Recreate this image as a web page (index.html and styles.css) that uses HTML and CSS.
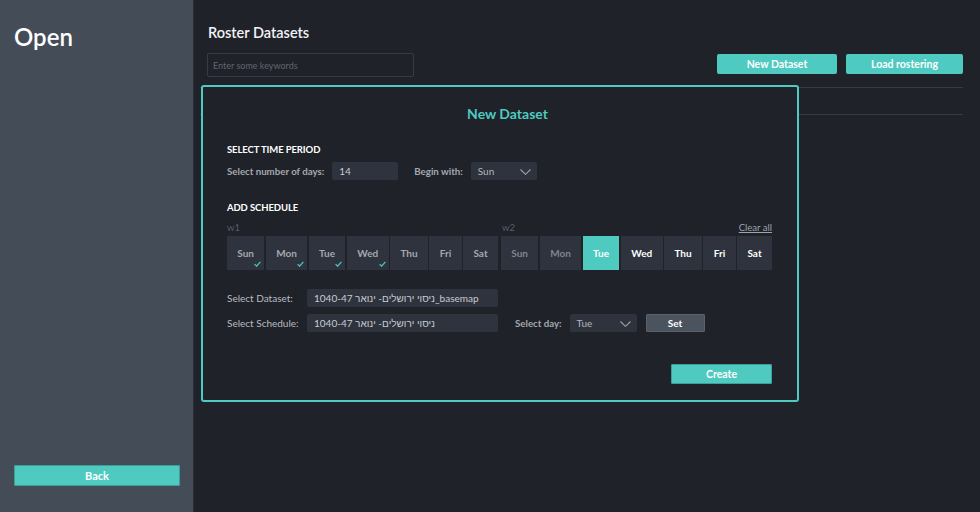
FILE: index.html
```html
<!DOCTYPE html>
<html>
<head>
<meta charset="utf-8">
<link rel="stylesheet" href="styles.css">
</head>
<body>
<div class="app">
  <aside class="sidebar">
    <h1 class="side-title">Open</h1>
    <button class="btn btn-back">Back</button>
  </aside>
  <main class="main">
    <h2 class="page-title">Roster Datasets</h2>
    <div class="toolbar">
      <div class="search">Enter some keywords</div>
      <div class="toolbar-btns">
        <button class="btn btn-top">New Dataset</button>
        <button class="btn btn-top">Load rostering</button>
      </div>
    </div>
    <div class="table">
      <div class="table-row"></div>
      <div class="table-row"></div>
    </div>

    <div class="modal">
      <div class="modal-title">New Dataset</div>

      <div class="section-title">SELECT TIME PERIOD</div>
      <div class="row">
        <span class="lbl-bold">Select number of days:</span>
        <div class="field field-days">14</div>
        <span class="lbl-bold lbl-begin">Begin with:</span>
        <div class="field field-select">Sun
          <svg class="chev" width="11" height="6" viewBox="0 0 11 6"><polyline points="0.5,0.5 5.5,5.3 10.5,0.5" fill="none" stroke="#9ba1a9" stroke-width="1.1"/></svg>
        </div>
      </div>

      <div class="section-title section-2">ADD SCHEDULE</div>
      <div class="weeks-labels">
        <span class="wk wk1">w1</span>
        <span class="wk wk2">w2</span>
        <span class="clear">Clear all</span>
      </div>
      <div class="weeks">
        <div class="week">
          <div class="day">Sun<svg class="check" width="7" height="6" viewBox="0 0 7 6"><polyline points="0.6,3.2 2.6,5.2 6.4,0.8" fill="none" stroke="#4ecac1" stroke-width="1.2"/></svg></div>
          <div class="day">Mon<svg class="check" width="7" height="6" viewBox="0 0 7 6"><polyline points="0.6,3.2 2.6,5.2 6.4,0.8" fill="none" stroke="#4ecac1" stroke-width="1.2"/></svg></div>
          <div class="day">Tue<svg class="check" width="7" height="6" viewBox="0 0 7 6"><polyline points="0.6,3.2 2.6,5.2 6.4,0.8" fill="none" stroke="#4ecac1" stroke-width="1.2"/></svg></div>
          <div class="day">Wed<svg class="check" width="7" height="6" viewBox="0 0 7 6"><polyline points="0.6,3.2 2.6,5.2 6.4,0.8" fill="none" stroke="#4ecac1" stroke-width="1.2"/></svg></div>
          <div class="day">Thu</div>
          <div class="day">Fri</div>
          <div class="day">Sat</div>
        </div>
        <div class="week">
          <div class="day day-dim">Sun</div>
          <div class="day day-dim">Mon</div>
          <div class="day day-active">Tue</div>
          <div class="day day-white">Wed</div>
          <div class="day day-white">Thu</div>
          <div class="day day-white">Fri</div>
          <div class="day day-white">Sat</div>
        </div>
      </div>

      <div class="row row-ds">
        <span class="lbl lbl-wide">Select Dataset:</span>
        <div class="field field-wide">ניסוי ירושלים- ינואר 1040-47_basemap</div>
      </div>
      <div class="row row-sch">
        <span class="lbl lbl-wide">Select Schedule:</span>
        <div class="field field-wide">ניסוי ירושלים- ינואר 1040-47</div>
        <span class="lbl-bold lbl-day">Select day:</span>
        <div class="field field-select field-day">Tue
          <svg class="chev" width="11" height="6" viewBox="0 0 11 6"><polyline points="0.5,0.5 5.5,5.3 10.5,0.5" fill="none" stroke="#9ba1a9" stroke-width="1.1"/></svg>
        </div>
        <button class="btn btn-set">Set</button>
      </div>

      <div class="create-row">
        <button class="btn btn-create">Create</button>
      </div>
    </div>
  </main>
</div>
</body>
</html>
```
FILE: styles.css
```css
* { box-sizing: border-box; }
html, body {
  margin: 0;
  padding: 0;
  width: 980px;
  height: 512px;
  overflow: hidden;
  background: #1f2229;
  font-family: Lato, "Liberation Sans", sans-serif;
}
.app {
  display: flex;
  width: 980px;
  height: 512px;
}
.sidebar {
  width: 194px;
  flex: none;
  background: #444c58;
  border-right: 1px solid #2b2f37;
  display: flex;
  flex-direction: column;
  padding: 0 14px 26px 14px;
}
.side-title {
  margin: 22px 0 0 0;
  font-size: 24px;
  font-weight: 600;
  color: #ffffff;
  line-height: 30px;
}
.btn {
  border: none;
  font-family: Lato, "Liberation Sans", sans-serif;
  font-weight: 700;
  color: #ffffff;
  background: #4ecac1;
  border-radius: 2px;
  cursor: pointer;
  padding: 0;
}
.btn-back {
  margin-top: auto;
  width: 166px;
  height: 21px;
  font-size: 11px;
  box-shadow: 0 0 0 1px #3f9e98 inset;
}
.main {
  flex: 1;
  position: relative;
  padding: 0 17px 0 14px;
}
.page-title {
  margin: 24px 0 0 0;
  font-size: 14.5px;
  font-weight: 600;
  color: #f2f3f5;
  line-height: 17px;
}
.toolbar {
  margin-top: 12px;
  display: flex;
  justify-content: space-between;
  align-items: flex-start;
}
.search {
  width: 207px;
  height: 24px;
  border: 1px solid #363b45;
  border-radius: 2px;
  color: #5f6672;
  font-size: 9px;
  line-height: 24px;
  padding-left: 5px;
  margin-left: -1px;
}
.toolbar-btns {
  display: flex;
  gap: 9px;
  margin-top: 1px;
}
.btn-top {
  height: 20px;
  font-size: 10.5px;
  width: 120px;
}
.btn-top + .btn-top {
  width: 117px;
}
.table {
  margin-top: 10px;
  margin-left: -8px;
}
.table-row {
  height: 27px;
  border-top: 1px solid #363b45;
}
.modal {
  position: absolute;
  left: 7px;
  top: 85px;
  width: 598px;
  height: 317px;
  border: 2px solid #4ecac1;
  border-radius: 3px;
  background: #1f2229;
  padding: 0 25px 0 24px;
}
.modal-title {
  margin-top: 18px;
  padding-left: 16px;
  text-align: center;
  color: #4ecac1;
  font-size: 14px;
  font-weight: 700;
  line-height: 17px;
}
.section-title {
  margin-top: 22px;
  font-size: 9.5px;
  font-weight: 700;
  color: #ffffff;
  line-height: 12px;
  letter-spacing: -0.1px;
}
.section-2 {
  margin-top: 22px;
}
.row {
  display: flex;
  align-items: center;
  margin-top: 6px;
  height: 18px;
}
.lbl-bold {
  font-size: 9.7px;
  font-weight: 700;
  color: #a3a8b0;
}
.lbl {
  font-size: 10px;
  color: #b8bcc3;
}
.lbl-wide {
  width: 80px;
  flex: none;
}
.field {
  height: 18px;
  background: #2e333d;
  border-radius: 2px;
  font-size: 10px;
  color: #c8ccd2;
  line-height: 18px;
  padding-left: 7px;
  margin-left: 8px;
  position: relative;
  white-space: nowrap;
}
.field-days {
  width: 66px;
}
.lbl-begin {
  margin-left: 16px;
}
.field-select {
  width: 66px;
  color: #b2b7be;
}
.chev {
  position: absolute;
  right: 6px;
  top: 7px;
}
.weeks-labels {
  display: flex;
  align-items: center;
  margin-top: 7px;
  height: 12px;
  font-size: 9.5px;
}
.wk {
  color: #575d68;
}
.wk2 {
  margin-left: 262px;
}
.clear {
  margin-left: auto;
  color: #9ea4ac;
  text-decoration: underline;
  font-size: 9.5px;
}
.weeks {
  display: flex;
  gap: 3px;
  margin-top: 3px;
  height: 34px;
}
.week {
  flex: 1;
  display: flex;
  gap: 1.5px;
}
.day {
  flex: 1 1 auto;
  background: #2e333d;
  display: flex;
  align-items: center;
  justify-content: center;
  font-size: 10px;
  font-weight: 700;
  color: #a3a8b0;
  position: relative;
  padding: 0 9px;
}
.check {
  position: absolute;
  right: 3px;
  bottom: 3px;
}
.day-dim {
  color: #7e8590;
}
.day-white {
  color: #ffffff;
}
.day-active {
  background: #4ecac1;
  color: #ffffff;
}
.row-ds {
  margin-top: 19px;
}
.row-sch {
  margin-top: 7px;
}
.field-wide {
  width: 191px;
  margin-left: 0;
}
.lbl-day {
  margin-left: 17px;
}
.field-day {
  width: 67px;
  margin-left: 8px;
}
.btn-set {
  width: 59px;
  height: 18px;
  margin-left: 9px;
  background: #4b535f;
  font-size: 10px;
  box-shadow: 0 0 0 1px #5a626e inset;
}
.create-row {
  display: flex;
  justify-content: flex-end;
  margin-top: 32px;
}
.btn-create {
  width: 101px;
  height: 20px;
  font-size: 10.5px;
  box-shadow: 0 0 0 1px #3f9e98 inset;
}
```
